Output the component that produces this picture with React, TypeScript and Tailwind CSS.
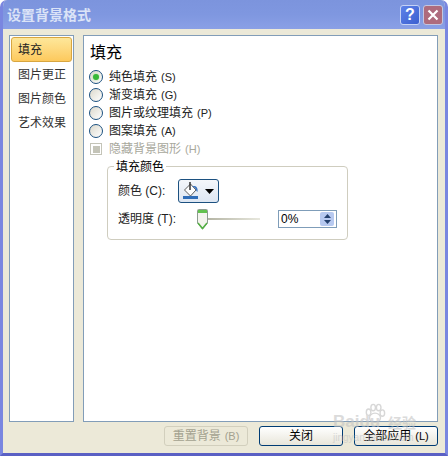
function Hot({ k }: { k: string }) {
  return <span className="text-[11px] ml-[4px]">({k})</span>;
}

function Radio({ on, label, hot }: { on?: boolean; label: string; hot: string }) {
  return (
    <div className="flex items-center h-[18px] gap-[6px]">
      <span className="w-[14px] h-[14px] rounded-full border border-[#1c5180] bg-gradient-to-br from-[#dcd9cc] to-white flex items-center justify-center">
        {on && <span className="w-[6px] h-[6px] rounded-full bg-[#38b838] shadow-[0_0_2px_#8fe08f]" />}
      </span>
      <span className="flex items-center">{label}<Hot k={hot} /></span>
    </div>
  );
}

function Tab({ label, active }: { label: string; active?: boolean }) {
  return (
    <div
      className={
        active
          ? "h-[25px] mb-[1px] flex items-center pl-[6px] rounded-[3px] border border-[#d8a640] bg-gradient-to-b from-[#fde79a] to-[#fdc95c]"
          : "h-[24px] flex items-center pl-[7px] text-[#333]"
      }
    >
      {label}
    </div>
  );
}

function Btn({ label, hot, disabled }: { label: string; hot?: string; disabled?: boolean }) {
  return (
    <div
      className={
        "w-[84px] h-[20px] flex items-center justify-center rounded-[3px] border " +
        (disabled
          ? "border-[#d2cfbd] text-[#a3a18f] bg-[#ece9d8]"
          : "border-[#003c74] text-black bg-gradient-to-b from-white to-[#e8e6da]")
      }
    >
      {label}
      {hot && <Hot k={hot} />}
    </div>
  );
}

export default function App() {
  return (
    <div className="w-[448px] h-[456px] bg-white font-['Liberation_Sans','Noto_Sans_CJK_SC',sans-serif] text-[12px] leading-none text-[#222]">
      <div className="relative w-full h-full flex flex-col rounded-t-[7px] overflow-hidden border-x-[3px] border-b-[3px] border-x-[#7a86e0] border-b-[#5a60c4] bg-[#ece9d8]">
        <div className="h-[29px] -mx-[3px] shrink-0 flex items-center justify-between pl-[7px] pr-[5px] bg-gradient-to-b from-[#7c94dd] via-[#7f97e0] to-[#8aa0e6]">
          <span className="text-[14px] font-bold text-[#dbe3f7] tracking-normal mt-[1px]">设置背景格式</span>
          <div className="flex gap-[3px]">
            <div className="w-[20px] h-[20px] rounded-[3px] border border-[#c5d2f5] bg-gradient-to-br from-[#5d82e8] to-[#3c5fd0] flex items-center justify-center">
              <span className="text-white text-[16px] font-bold">?</span>
            </div>
            <div className="w-[20px] h-[20px] rounded-[3px] border border-[#c3c6e0] bg-[#ae6b7d] flex items-center justify-center">
              <svg width="12" height="12" viewBox="0 0 12 12"><path d="M1.5 1.5 10.5 10.5M10.5 1.5 1.5 10.5" stroke="#fff" strokeWidth="2.2" /></svg>
            </div>
          </div>
        </div>

        <div className="flex-1 flex flex-col pl-[6px] pr-[7px] pt-[6px]">
          <div className="h-[387px] flex gap-[9px]">
            <div className="w-[65px] border border-[#829db8] bg-white p-[1px] flex flex-col">
              <Tab label="填充" active />
              <Tab label="图片更正" />
              <Tab label="图片颜色" />
              <Tab label="艺术效果" />
            </div>
            <div className="flex-1 border border-[#829db8] bg-white pl-[5px] pt-[9px]">
              <div className="text-[16px] h-[23px] text-black ml-[1px]">填充</div>
              <Radio on label="纯色填充" hot="S" />
              <Radio label="渐变填充" hot="G" />
              <Radio label="图片或纹理填充" hot="P" />
              <Radio label="图案填充" hot="A" />
              <div className="flex items-center h-[18px] gap-[7px] ml-[1px] text-[#a8a89c]">
                <span className="w-[12px] h-[12px] border border-[#c4c4b8] flex items-center justify-center">
                  <span className="w-[7px] h-[7px] bg-[#c4c4b8]" />
                </span>
                <span className="flex items-center">隐藏背景图形<Hot k="H" /></span>
              </div>
              <div className="relative ml-[18px] mt-[8px] w-[241px] h-[74px] border border-[#cfcdbf] rounded-[4px] pl-[10px]">
                <span className="absolute left-[6px] -top-[6px] px-[2px] bg-white text-black">填充颜色</span>
                <div className="flex items-center h-[24px] mt-[12px]">
                  <span className="w-[60px]">颜色 (C):</span>
                  <div className="w-[41px] h-[24px] rounded-[3px] border border-[#1c5180] bg-gradient-to-b from-[#f4f7fb] to-[#dde6f2] flex items-center gap-[6px] pl-[4px]">
                    <svg width="16" height="18" viewBox="0 0 16 18">
                      <path d="M1.5 8 7.5 2l5.5 6-5.5 6z" fill="#fff" stroke="#5a5a5a" />
                      <path d="M7 0v8" stroke="#333" strokeWidth="1.5" />
                      <path d="M9 4h3c2 .5 3 3 2.5 6-1-1-2-2.5-2.500-4z" fill="#3a74c0" />
                      <rect x="0" y="14" width="15" height="3" fill="#2f6db8" />
                    </svg>
                    <svg width="9" height="5" viewBox="0 0 9 5"><path d="M0 0h9L4.5 5z" fill="#000" /></svg>
                  </div>
                </div>
                <div className="flex items-center h-[20px] mt-[6px]">
                  <span className="w-[79px]">透明度 (T):</span>
                  <svg className="shrink-0" width="11" height="21" viewBox="0 0 11 21">
                    <path d="M.5 1.500q0-1 1-1h8q1 0 1 1V14l-5 6-5-6z" fill="#f4f4ee" stroke="#8d9c90" />
                    <path d="M1 1h9v3H1z" fill="#63c24f" />
                    <path d="M1 14l4.5 5.500L10 14" fill="none" stroke="#53b043" strokeWidth="1.5" />
                  </svg>
                  <div className="w-[52px] h-[2px] -mt-[1px] bg-gradient-to-r from-[#b5b5a5] to-[#e8e8de]" />
                  <div className="ml-[18px] w-[59px] h-[18px] border border-[#7f9db9] flex items-center justify-between pl-[2px] pr-[2px] bg-white text-black">
                    <span>0%</span>
                    <div className="w-[14px] h-[14px] rounded-[2px] bg-[#b7c9f0] flex flex-col items-center justify-center gap-[2px]">
                      <svg width="7" height="4" viewBox="0 0 7 4"><path d="M3.500 0 7 4H0z" fill="#24406e" /></svg>
                      <svg width="7" height="4" viewBox="0 0 7 4"><path d="M0 0h7L3.500 4z" fill="#24406e" /></svg>
                    </div>
                  </div>
                </div>
              </div>
            </div>
          </div>
          <div className="flex justify-end gap-[11px] mt-[4px]">
            <Btn label="重置背景" hot="B" disabled />
            <Btn label="关闭" />
            <Btn label="全部应用" hot="L" />
          </div>
        </div>

        <div className="absolute left-[330px] top-[400px] w-[112px] h-[50px] text-[#c4c4c4] opacity-60 pointer-events-none">
          <svg className="absolute left-[31px] top-[2px]" width="22" height="24" viewBox="0 0 24 24" fill="none" stroke="#bdbdbd" strokeWidth="1.5">
            <ellipse cx="12" cy="16" rx="6" ry="5" />
            <ellipse cx="5" cy="10" rx="2.500" ry="3.500" />
            <ellipse cx="10" cy="5" rx="2.500" ry="3.500" />
            <ellipse cx="16" cy="5" rx="2.500" ry="3.500" />
            <ellipse cx="20" cy="11" rx="2.500" ry="3.500" />
          </svg>
          <span className="absolute left-[0px] top-[13px] text-[17px] font-bold whitespace-nowrap">Baidu</span>
          <span className="absolute left-[55px] top-[16px] text-[14px] font-bold whitespace-nowrap">经验</span>
          <span className="absolute left-[0px] top-[33px] text-[10px] whitespace-nowrap">jingyan.baidu.com</span>
        </div>
      </div>
    </div>
  );
}
